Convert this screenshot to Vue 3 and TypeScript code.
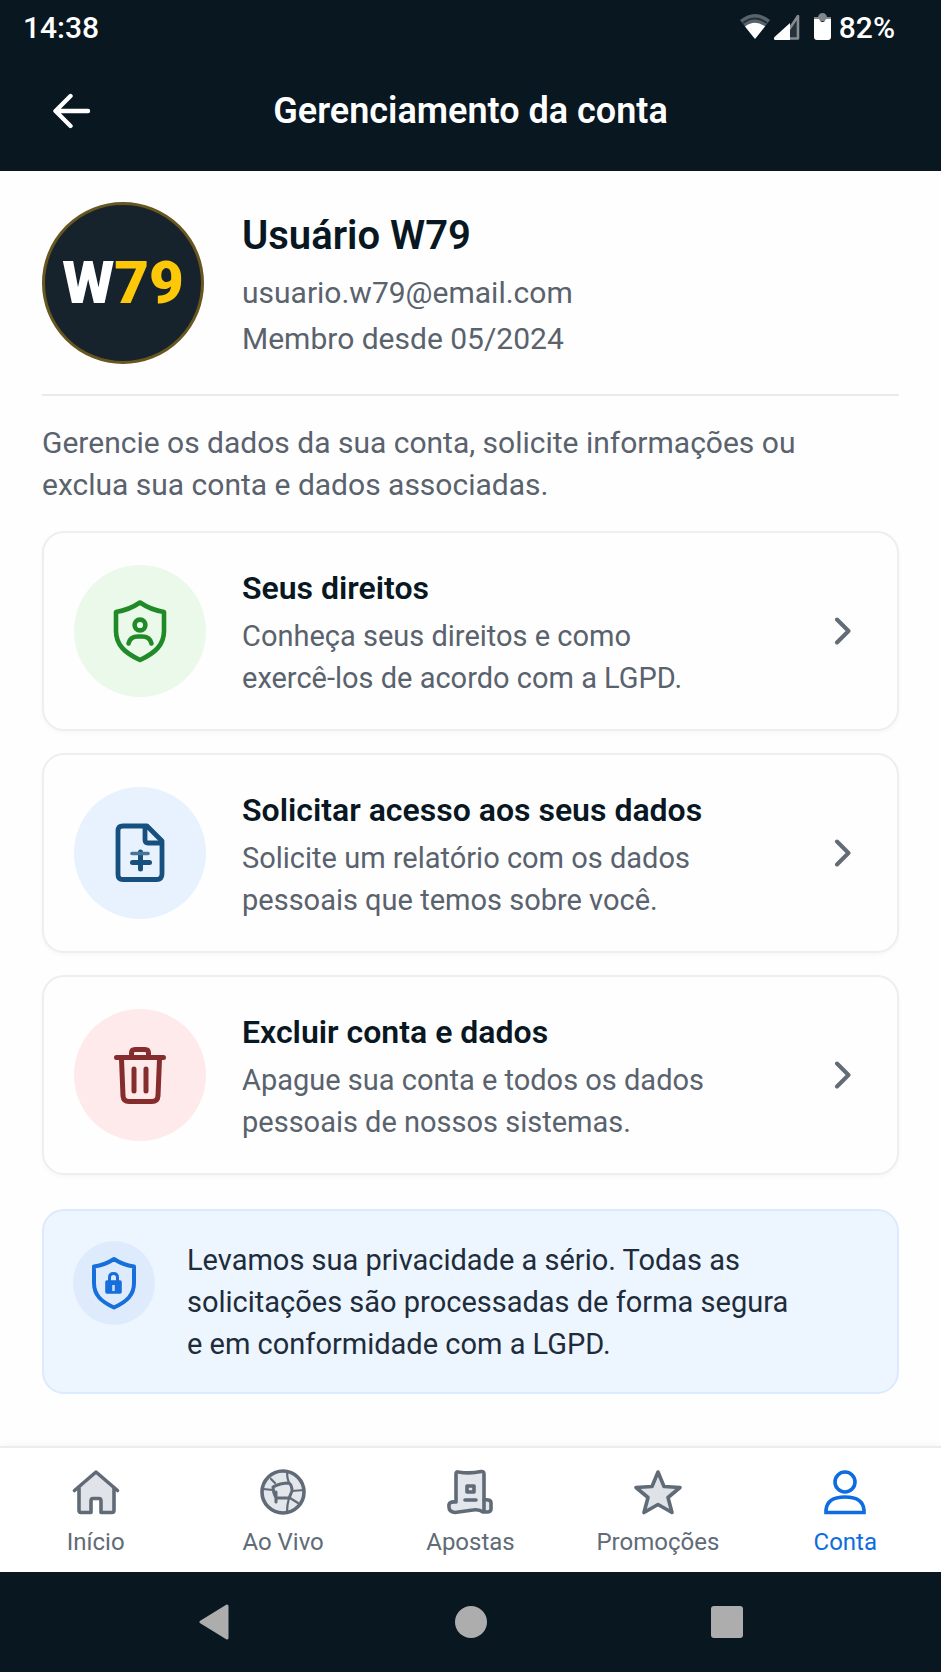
<script setup lang="ts">
interface Option {
  id: string
  icon: 'rights' | 'report' | 'trash'
  title: string
  lines: string[]
}

interface Tab {
  id: string
  label: string
  active?: boolean
}

const options: Option[] = [
  { id: 'direitos', icon: 'rights', title: 'Seus direitos', lines: ['Conheça seus direitos e como', 'exercê-los de acordo com a LGPD.'] },
  { id: 'acesso', icon: 'report', title: 'Solicitar acesso aos seus dados', lines: ['Solicite um relatório com os dados', 'pessoais que temos sobre você.'] },
  { id: 'excluir', icon: 'trash', title: 'Excluir conta e dados', lines: ['Apague sua conta e todos os dados', 'pessoais de nossos sistemas.'] },
]

const tabs: Tab[] = [
  { id: 'inicio', label: 'Início' },
  { id: 'aovivo', label: 'Ao Vivo' },
  { id: 'apostas', label: 'Apostas' },
  { id: 'promocoes', label: 'Promoções' },
  { id: 'conta', label: 'Conta', active: true },
]
</script>

<template>
  <div class="screen">
    <header class="top">
      <div class="status">
        <span>14:38</span>
        <div class="status-right">
          <svg class="wifi" width="32" height="28" viewBox="0 0 32 28" aria-hidden="true">
            <path d="M1 7Q16-5 31 7L16 26Z" fill="#59636b" />
            <path d="M4 10Q16 1 28 10" fill="none" stroke="#25313a" stroke-width="2" />
            <path d="M6 13.500Q16 6 26 13.500L16.800 25Q16 26 15.200 25Z" fill="#fff" />
          </svg>
          <svg class="signal" width="27" height="28" viewBox="0 0 27 28" aria-hidden="true">
            <path d="M25 3V25.500H10Z" fill="#26323b" stroke="#858b90" stroke-width="2.600" stroke-linejoin="round" />
            <path d="M17 10V27H2Q0 26 1.500 24Z" fill="#fff" />
          </svg>
          <svg class="battery" width="19" height="28" viewBox="0 0 19 28" aria-hidden="true">
            <path d="M1 8V4H5Q6 0 9.500 0Q13 0 14 4H18V8Z" fill="#81878c" />
            <path d="M1 6H6Q7 9 9.500 9Q12 9 13 6H18V24Q18 27 15 27H4Q1 27 1 24Z" fill="#fff" />
          </svg>
          <span>82%</span>
        </div>
      </div>
      <div class="bar">
        <button class="back" type="button" aria-label="Voltar">
          <svg width="40" height="36" viewBox="0 0 40 36" aria-hidden="true">
            <path d="M36 18H4M18.500 3L3.500 18L18.500 33" fill="none" stroke="#fff" stroke-width="4.400" stroke-linecap="round" stroke-linejoin="round" />
          </svg>
        </button>
        <h1>Gerenciamento da conta</h1>
      </div>
    </header>

    <main class="content">
      <section class="profile">
        <div class="avatar"><span class="logo">W<span class="gold">79</span></span></div>
        <div class="who">
          <h2>Usuário W79</h2>
          <p>usuario.w79@email.com</p>
          <p>Membro desde 05/2024</p>
        </div>
      </section>

      <p class="intro">Gerencie os dados da sua conta, solicite informações ou<br />exclua sua conta e dados associadas.</p>

      <div class="options">
        <button v-for="o in options" :key="o.id" type="button" class="card">
          <span class="disc" :class="o.icon">
            <svg v-if="o.icon === 'rights'" width="56" height="64" viewBox="0 0 56 64" fill="none" stroke="#1f8a27" stroke-width="4.600" stroke-linecap="round" stroke-linejoin="round" aria-hidden="true">
              <path d="M28 3.500Q17 11 4 13V32C4 46 13 54 28 61C43 54 52 46 52 32V13Q39 11 28 3.500Z" />
              <circle cx="28" cy="26" r="5.400" />
              <path d="M16.500 44.500Q18 37.500 26 37.500H30Q38 37.500 39.500 44.500" />
            </svg>
            <svg v-else-if="o.icon === 'report'" width="52" height="64" viewBox="0 0 52 64" fill="none" stroke="#17507f" stroke-width="4.800" stroke-linecap="round" stroke-linejoin="round" aria-hidden="true">
              <path d="M9 5H33L48 20V53Q48 58.500 42.500 58.500H9Q4 58.500 4 53.500V10Q4 5 9 5Z" />
              <path d="M31 6V19Q31 22 34 22H47" />
              <path d="M26.500 31V48M18.500 41.500H35.500" stroke-width="5" />
              <path d="M18 32.500H34" stroke-width="3.600" stroke="#477599" />
            </svg>
            <svg v-else width="56" height="62" viewBox="0 0 56 62" fill="none" stroke="#852c2d" stroke-width="5" stroke-linecap="round" stroke-linejoin="round" aria-hidden="true">
              <path d="M4.500 13.500H51.500M19.500 12V9Q19.500 5.500 23 5.500H33Q36.500 5.500 36.500 9V12" />
              <path d="M9.500 15L11 52Q11.500 57.500 17 57.500H40Q45.500 57.500 46 52L47.500 15" />
              <path d="M22 25V47M34 25V47" />
            </svg>
          </span>
          <span class="body">
            <span class="title">{{ o.title }}</span>
            <span v-for="line in o.lines" :key="line" class="line">{{ line }}</span>
          </span>
          <svg class="chevron" width="18" height="28" viewBox="0 0 18 28" aria-hidden="true">
            <path d="M3 2.500L14.500 14L3 25.500" fill="none" stroke="#626b76" stroke-width="4" stroke-linecap="round" stroke-linejoin="round" />
          </svg>
        </button>
      </div>

      <aside class="notice">
        <span class="badge">
          <svg width="46" height="54" viewBox="0 0 46 54" fill="none" stroke="#176fdb" stroke-linejoin="round" aria-hidden="true">
            <path d="M23 3Q14 9 3 10.500V27C3 39 10 45.500 23 51.500C36 45.500 43 39 43 27V10.500Q32 9 23 3Z" stroke-width="4" />
            <rect x="15" y="25" width="15" height="12" rx="1" fill="#176fdb" stroke-width="1.600" />
            <path d="M18.500 25V21.500Q18.500 17.500 22.500 17.500Q26.500 17.500 26.500 21.500V25" stroke-width="3" />
            <path d="M22.500 29V35" stroke="#c7ddf8" stroke-width="2.600" />
          </svg>
        </span>
        <p>Levamos sua privacidade a sério. Todas as<br />solicitações são processadas de forma segura<br />e em conformidade com a LGPD.</p>
      </aside>
    </main>

    <nav class="tabs" aria-label="Principal">
      <a v-for="t in tabs" :key="t.id" :href="'#' + t.id" class="tab" :class="{ active: t.active }" :aria-current="t.active ? 'page' : undefined">
        <svg width="50" height="48" viewBox="0 0 50 48" fill="none" stroke="currentColor" stroke-width="3.600" stroke-linecap="round" stroke-linejoin="round" aria-hidden="true">
          <template v-if="t.id === 'inicio'">
            <path d="M8 20L25 5L42 20V44.500H30V33Q30 31 28 31H22Q20 31 20 33V44.500H8Z" fill="#e0e3e8" stroke="none" />
            <path d="M3.500 22.500L25 4L46.500 22.500" />
            <path d="M8 20V42Q8 44.500 10 44.500H20V33Q20 30.500 22 30.500H28Q30 30.500 30 33V44.500H41Q43 44.500 43 42V20" />
          </template>
          <template v-else-if="t.id === 'aovivo'">
            <circle cx="25" cy="24" r="21" fill="#e3e6ea" />
            <path d="M15 19Q22 15 31 15Q34 17 34 23Q32 28 31 30L18 30Q15 24 15 19ZM18 24V34" stroke-width="3" />
            <path d="M29 4Q29 10 31 15M5 21L15 22M34 23L46 22M31 30Q29 37 29 44M32 30L40 35M13 11L17 15" stroke-width="2.200" />
          </template>
          <template v-else-if="t.id === 'apostas'">
            <path d="M11 34V6Q11 3.500 13.500 4Q25 6 36 3.500Q39 3 39 6V32Q46 31 46 35V41Q46 44 42 44H38Q34 41 28 42L10 44.500Q4 44 4 39Q3 33 11 34Z" fill="#e3e6ea" />
            <path d="M39 32V43M22 18H29V24H22ZM20 32H31" />
          </template>
          <template v-else-if="t.id === 'promocoes'">
            <path d="M25 4L31 18.500L47 19.500L35 29.500L39 44.500L25 36.500L11 44.500L15 29.500L3 19.500L19 18.500Z" fill="#dfe2e7" />
          </template>
          <template v-else>
            <circle cx="25" cy="14" r="10" />
            <path d="M6 44.500V42Q7 29 25 29Q43 29 44 42V44.500Z" stroke-linejoin="miter" />
          </template>
        </svg>
        <span>{{ t.label }}</span>
      </a>
    </nav>

    <div class="system">
      <button type="button" aria-label="Voltar no sistema">
        <svg width="32" height="36" viewBox="0 0 32 36" aria-hidden="true"><path d="M28 2L2 18L28 34Z" fill="#adadad" stroke="#adadad" stroke-width="3" stroke-linejoin="round" /></svg>
      </button>
      <button type="button" aria-label="Tela inicial">
        <svg width="32" height="32" viewBox="0 0 32 32" aria-hidden="true"><circle cx="16" cy="16" r="16" fill="#adadad" /></svg>
      </button>
      <button type="button" aria-label="Aplicativos recentes">
        <svg width="32" height="32" viewBox="0 0 32 32" aria-hidden="true"><rect width="32" height="32" rx="3" fill="#adadad" /></svg>
      </button>
    </div>
  </div>
</template>

<style>
body {
  margin: 0;
  background: #fefefe;
}
</style>

<style scoped>
.screen {
  display: flex;
  flex-direction: column;
  min-height: 100vh;
  background: #fefefe;
  color: #081722;
  font-family: Roboto, "Noto Sans", sans-serif;
}
h1, h2, p {
  margin: 0;
}
button {
  padding: 0;
  border: 0;
  background: none;
  color: inherit;
  font: inherit;
  cursor: pointer;
}
svg {
  display: block;
  flex: none;
}
.top {
  background: #081720;
  color: #fff;
}
.status {
  display: flex;
  align-items: center;
  justify-content: space-between;
  height: 54px;
  padding: 0 46px 0 23px;
  font-size: 30px;
  font-weight: 500;
}
.status-right {
  display: flex;
  align-items: center;
}
.signal {
  margin-left: 2px;
}
.battery {
  margin: 0 7px 0 13px;
}
.bar {
  display: grid;
  grid-template-columns: 40px 1fr 40px;
  align-items: center;
  height: 113px;
  padding: 0 52px 4px;
}
h1 {
  font-size: 36px;
  font-weight: 600;
  line-height: 44px;
  text-align: center;
}
.content {
  flex: 1;
  padding: 31px 42px 0;
}
.profile {
  display: flex;
  align-items: center;
  gap: 38px;
  padding-bottom: 30px;
  border-bottom: 2px solid #e8eaee;
}
.avatar {
  display: flex;
  align-items: center;
  justify-content: center;
  flex: none;
  box-sizing: border-box;
  width: 162px;
  height: 162px;
  border: 3px solid #67561f;
  border-radius: 50%;
  background: #17232c;
}
.logo {
  color: #fff;
  font-size: 60px;
  font-weight: 900;
  line-height: 64px;
}
.gold {
  color: #fdc808;
}
h2 {
  margin-bottom: 8px;
  font-size: 40px;
  font-weight: 600;
  line-height: 52px;
}
.who {
  padding-top: 6px;
}
.who p {
  color: #59626d;
  font-size: 30px;
  line-height: 46px;
}
.intro {
  margin: 26px 0 25px;
  color: #59626d;
  font-size: 30px;
  line-height: 42px;
}
.options {
  display: grid;
  gap: 22px;
}
.card {
  display: flex;
  align-items: center;
  box-sizing: border-box;
  width: 100%;
  min-height: 200px;
  padding: 30px 45px 30px 30px;
  border: 2px solid #eceef0;
  border-radius: 22px;
  background: #fefefe;
  box-shadow: 0 2px 4px rgba(20, 30, 40, 0.03);
  text-align: left;
}
.disc {
  display: flex;
  align-items: center;
  justify-content: center;
  flex: none;
  width: 132px;
  height: 132px;
  border-radius: 50%;
}
.disc.rights {
  background: #eaf9ea;
}
.disc.report {
  background: #e7f2fe;
}
.disc.trash {
  background: #feeaea;
}
.body {
  flex: 1;
  padding-top: 4px;
  margin-left: 36px;
}
.title, .line {
  display: block;
}
.title {
  margin-bottom: 6px;
  font-size: 32px;
  font-weight: 600;
  line-height: 42px;
}
.line {
  color: #59626d;
  font-size: 29px;
  line-height: 42px;
}
.notice {
  display: flex;
  gap: 32px;
  margin-top: 34px;
  padding: 28px 29px 27px;
  border: 2px solid #dbeafc;
  border-radius: 22px;
  background: #edf5ff;
  color: #202c3a;
  font-size: 29px;
  line-height: 42px;
}
.badge {
  display: flex;
  align-items: center;
  justify-content: center;
  flex: none;
  width: 82px;
  height: 84px;
  margin-top: 2px;
  border-radius: 50%;
  background: #deebfc;
}
.tabs {
  display: grid;
  grid-template-columns: repeat(5, 1fr);
  margin-top: 24px;
  padding: 20px 2px 14px;
  border-top: 2px solid #ececed;
  background: #fff;
  box-shadow: 0 -2px 6px rgba(0, 0, 0, 0.03);
}
.tab {
  display: flex;
  flex-direction: column;
  align-items: center;
  gap: 10px;
  color: #606b77;
  font-size: 24px;
  line-height: 32px;
  text-decoration: none;
}
.tab.active {
  color: #0d6de0;
}
.system {
  display: grid;
  grid-template-columns: repeat(3, 256px);
  justify-content: center;
  height: 100px;
  background: #081720;
}
.system button {
  display: flex;
  align-items: center;
  justify-content: center;
}
</style>
